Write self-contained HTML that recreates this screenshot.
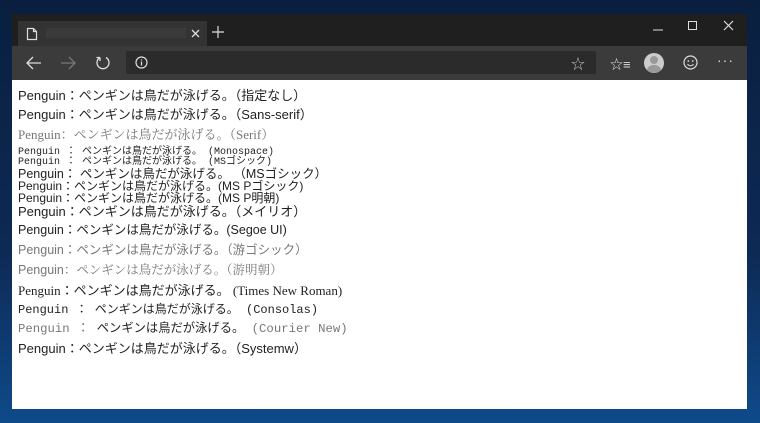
<!DOCTYPE html>
<html><head><meta charset="utf-8"><style>
*{margin:0;padding:0;box-sizing:border-box}
body{width:760px;height:423px;overflow:hidden;background:linear-gradient(180deg,#0a1f3f 0%,#0d2a55 60%,#0f4a8a 100%);position:relative;font-family:"Liberation Sans","Noto Sans CJK JP",sans-serif}
.win{position:absolute;left:12px;top:14px;width:735px;height:395px;background:#1f1f1f}
.tab{position:absolute;left:6px;top:7px;width:189px;height:25px;background:#333}
.tb{position:absolute;left:0;top:32px;width:735px;height:34px;background:#3b3b3b}
.addr{position:absolute;left:114px;top:5px;width:470px;height:23px;background:#2b2b2b;border-radius:2px}
.content{position:absolute;left:0;top:66px;width:735px;height:329px;background:#fff}
.l{position:absolute;left:6px;white-space:nowrap;color:#222;line-height:1}
.g{color:#777}
</style></head><body>
<div class="win">
 <div class="tab">
  <svg style="position:absolute;left:8px;top:6px" width="12" height="14"><path d="M1.5 1.5h6l3 3v8h-9z M7.5 1.5v3h3" fill="none" stroke="#ddd" stroke-width="1.2"/></svg>
  <div style="position:absolute;left:28px;top:7px;width:140px;height:10px;background:#3a3a3a"></div>
  <svg style="position:absolute;left:173px;top:8px" width="9" height="9"><path d="M1 1l7 7M8 1l-7 7" stroke="#ddd" stroke-width="1.3"/></svg>
 </div>
 <svg style="position:absolute;left:200px;top:12px" width="12" height="12"><path d="M6 0v12M0 6h12" stroke="#ddd" stroke-width="1.2"/></svg>
 <svg style="position:absolute;left:640px;top:10px" width="12" height="12"><path d="M1 6h10" stroke="#ddd"/></svg>
 <svg style="position:absolute;left:675px;top:6px" width="12" height="12"><rect x="1.5" y="1.5" width="8" height="8" fill="none" stroke="#ddd"/></svg>
 <svg style="position:absolute;left:711px;top:6px" width="12" height="12"><path d="M1 1l9 9M10 1l-9 9" stroke="#ddd" stroke-width="1.2"/></svg>
 <div class="tb">
  <svg style="position:absolute;left:14px;top:10px" width="16" height="14"><path d="M15 7H2M7 1L1 7l6 6" fill="none" stroke="#ddd" stroke-width="1.3"/></svg>
  <svg style="position:absolute;left:48px;top:10px" width="16" height="14"><path d="M1 7h13M9 1l6 6-6 6" fill="none" stroke="#777" stroke-width="1.3"/></svg>
  <svg style="position:absolute;left:83px;top:9px" width="16" height="16"><path d="M5 2.5A6 6 0 1 0 11 2.5M5 2.5V6M5 2.5H1.5" fill="none" stroke="#ddd" stroke-width="1.3"/></svg>
  <div class="addr">
   <svg style="position:absolute;left:9px;top:5px" width="13" height="13"><circle cx="6.5" cy="6.5" r="5.5" fill="none" stroke="#ddd" stroke-width="1.2"/><path d="M6.5 5.5v4M6.5 3.5v1" stroke="#ddd" stroke-width="1.3"/></svg>
   <div style="position:absolute;left:445px;top:3px;color:#bbb;font-size:14px">☆</div>
  </div>
  <div style="position:absolute;left:598px;top:8px;color:#ddd;font-size:13px">☆≡</div>
  <div style="position:absolute;left:632px;top:7px;width:20px;height:20px;border-radius:50%;background:#ccc;overflow:hidden"><div style="position:absolute;left:6px;top:3px;width:8px;height:8px;border-radius:50%;background:#999"></div><div style="position:absolute;left:3px;top:12px;width:14px;height:10px;border-radius:50%;background:#999"></div></div>
  <svg style="position:absolute;left:671px;top:9px" width="15" height="15"><circle cx="7.5" cy="7.5" r="6.5" fill="none" stroke="#ddd" stroke-width="1.2"/><circle cx="5.3" cy="6" r=".9" fill="#ddd"/><circle cx="9.7" cy="6" r=".9" fill="#ddd"/><path d="M4.5 9a3.5 3.5 0 0 0 6 0" fill="none" stroke="#ddd"/></svg>
  <div style="position:absolute;left:705px;top:6px;color:#ddd;font-size:14px;letter-spacing:1px">···</div>
 </div>
 <div class="content">
  <div class="l" style="top:9px;font-size:13px">Penguin：ペンギンは鳥だが泳げる。（指定なし）</div>
  <div class="l" style="top:28px;font-size:13px">Penguin：ペンギンは鳥だが泳げる。（Sans-serif）</div>
  <div class="l g" style="top:48px;font-size:13px;font-family:'Liberation Serif','Noto Serif CJK SC',serif">Penguin：ペンギンは鳥だが泳げる。（Serif）</div>
  <div class="l" style="top:68px;font-size:10px;font-family:'Liberation Mono','Noto Sans CJK JP',monospace">Penguin ： ペンギンは鳥だが泳げる。 (Monospace)</div>
  <div class="l" style="top:78px;font-size:10px;font-family:'Liberation Mono','Noto Sans CJK JP',monospace">Penguin ： ペンギンは鳥だが泳げる。 (MSゴシック)</div>
  <div class="l" style="top:88px;font-size:12.5px">Penguin： ペンギンは鳥だが泳げる。 （MSゴシック）</div>
  <div class="l" style="top:100px;font-size:12px">Penguin：ペンギンは鳥だが泳げる。(MS Pゴシック)</div>
  <div class="l" style="top:112px;font-size:12px">Penguin：ペンギンは鳥だが泳げる。(MS P明朝)</div>
  <div class="l" style="top:125px;font-size:13px">Penguin：ペンギンは鳥だが泳げる。（メイリオ）</div>
  <div class="l" style="top:144px;font-size:12.5px">Penguin：ペンギンは鳥だが泳げる。(Segoe UI)</div>
  <div class="l g" style="top:164px;font-size:12.5px">Penguin：ペンギンは鳥だが泳げる。（游ゴシック）</div>
  <div class="l g" style="top:184px;font-size:12.5px;font-family:'Liberation Sans','Noto Serif CJK SC',serif">Penguin：ペンギンは鳥だが泳げる。（游明朝）</div>
  <div class="l" style="top:204px;font-size:13px;font-family:'Liberation Serif','Noto Sans CJK JP',serif">Penguin：ペンギンは鳥だが泳げる。 (Times New Roman)</div>
  <div class="l" style="top:224px;font-size:12px;font-family:'Liberation Mono','Noto Sans CJK JP',monospace">Penguin ： ペンギンは鳥だが泳げる。 (Consolas)</div>
  <div class="l g" style="top:243px;font-size:12.3px;font-family:'Liberation Mono','Noto Sans CJK JP',monospace">Penguin ： <span style="color:#222">ペンギンは鳥だが泳げる。</span> (Courier New)</div>
  <div class="l" style="top:262px;font-size:13px">Penguin：ペンギンは鳥だが泳げる。（Systemw）</div>
 </div>
</div>
</body></html>
